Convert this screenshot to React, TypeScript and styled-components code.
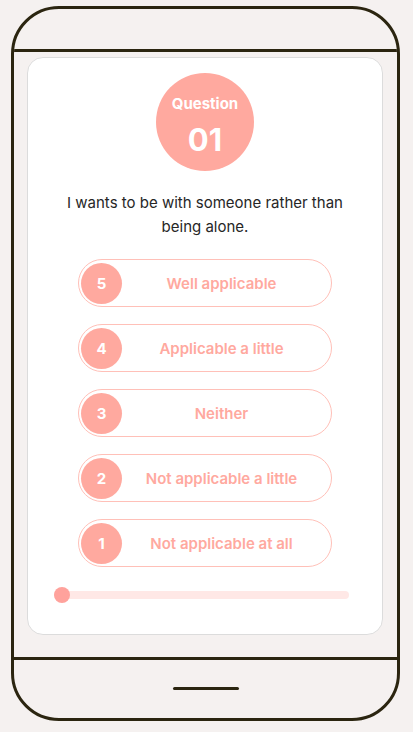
import React from "react";
import styled, { createGlobalStyle } from "styled-components";

const Global = createGlobalStyle`
  html, body { margin: 0; padding: 0; background: #f5f1f0; }
  body { font-family: Inter, "Noto Sans", sans-serif; }
`;

const Phone = styled.div`
  box-sizing: border-box;
  margin: 6px 0 0 11px;
  width: 389px;
  height: 715px;
  border: 3px solid #2b2510;
  border-radius: 48px;
  display: flex;
  flex-direction: column;
  overflow: hidden;
`;

const TopBar = styled.div`
  height: 40px;
  flex: none;
  border-bottom: 3px solid #2b2510;
`;

const Screen = styled.div`
  flex: 1;
  padding: 5px 14px 0 13px;
  border-bottom: 3px solid #2b2510;
`;

const BottomBar = styled.div`
  height: 58px;
  flex: none;
  display: flex;
  justify-content: center;
  padding-top: 27px;
  box-sizing: border-box;
`;

const HomeIndicator = styled.div`
  width: 66px;
  height: 3px;
  border-radius: 2px;
  background: #2b2510;
`;

const Card = styled.div`
  box-sizing: border-box;
  height: 578px;
  background: #fff;
  border: 1px solid #dcdcdc;
  border-radius: 16px;
  display: flex;
  flex-direction: column;
  align-items: center;
  padding-top: 15px;
`;

const Badge = styled.div`
  width: 98px;
  height: 98px;
  border-radius: 50%;
  background: #ffa99f;
  color: #fff;
  display: flex;
  flex-direction: column;
  align-items: center;
  justify-content: center;
  font-weight: 700;
`;

const BadgeLabel = styled.div`
  font-size: 15px;
  line-height: 18px;
  margin-top: 9px;
`;

const BadgeNum = styled.div`
  font-size: 31px;
  line-height: 36px;
  margin-top: 9px;
`;

const Prompt = styled.p`
  margin: 20px 0 0;
  width: 300px;
  text-align: center;
  font-size: 15px;
  line-height: 24px;
  color: #262626;
`;

const Options = styled.div`
  margin-top: 20px;
  display: flex;
  flex-direction: column;
  gap: 17px;
`;

const Option = styled.button`
  box-sizing: border-box;
  width: 254px;
  height: 48px;
  border: 1.5px solid #ffc0b8;
  border-radius: 24px;
  background: #fff;
  padding: 0 0 0 2px;
  display: flex;
  align-items: center;
  font-family: inherit;
  cursor: pointer;
`;

const Num = styled.span`
  width: 41px;
  height: 41px;
  border-radius: 50%;
  background: #ffa99f;
  color: #fff;
  font-weight: 700;
  font-size: 15px;
  display: flex;
  align-items: center;
  justify-content: center;
  flex: none;
`;

const Label = styled.span`
  flex: 1;
  text-align: center;
  padding-right: 10px;
  color: #ffa99f;
  font-weight: 600;
  font-size: 15px;
`;

const Slider = styled.div`
  align-self: flex-start;
  margin: 24px 0 0 26px;
  width: 295px;
  height: 8px;
  border-radius: 4px;
  background: #ffe8e6;
  position: relative;
`;

const Thumb = styled.div`
  position: absolute;
  left: 0;
  top: -4px;
  width: 16px;
  height: 16px;
  border-radius: 50%;
  background: #ffa29c;
`;

const options = [
  { n: 5, t: "Well applicable" },
  { n: 4, t: "Applicable a little" },
  { n: 3, t: "Neither" },
  { n: 2, t: "Not applicable a little" },
  { n: 1, t: "Not applicable at all" },
];

export default function App() {
  return (
    <>
      <Global />
      <Phone>
        <TopBar />
        <Screen>
          <Card>
            <Badge>
              <BadgeLabel>Question</BadgeLabel>
              <BadgeNum>01</BadgeNum>
            </Badge>
            <Prompt>I wants to be with someone rather than being alone.</Prompt>
            <Options>
              {options.map((o) => (
                <Option key={o.n}>
                  <Num>{o.n}</Num>
                  <Label>{o.t}</Label>
                </Option>
              ))}
            </Options>
            <Slider>
              <Thumb />
            </Slider>
          </Card>
        </Screen>
        <BottomBar>
          <HomeIndicator />
        </BottomBar>
      </Phone>
    </>
  );
}
